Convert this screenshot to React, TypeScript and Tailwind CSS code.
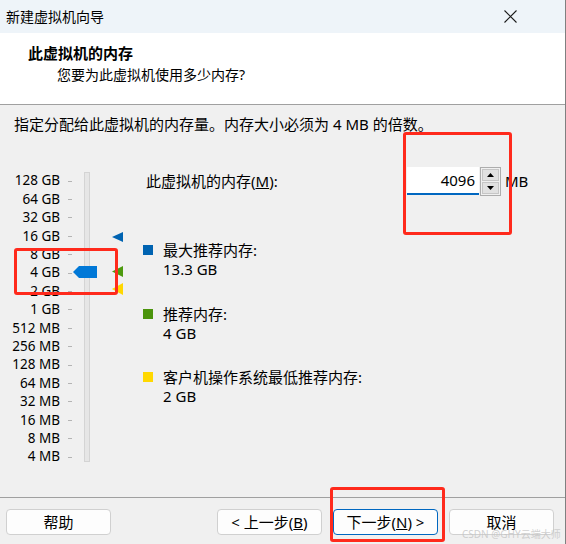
import React from 'react';

const levels = [
  '128 GB', '64 GB', '32 GB', '16 GB', '8 GB', '4 GB', '2 GB', '1 GB',
  '512 MB', '256 MB', '128 MB', '64 MB', '32 MB', '16 MB', '8 MB', '4 MB',
];

const Legend: React.FC<{ color: string; label: string; value: string }> = ({ color, label, value }) => (
  <div className="flex">
    <div className={`w-[10px] h-[10px] mt-[4px] shrink-0 ${color}`} />
    <div className="ml-[10px] leading-[19px]">
      <div>{label}</div>
      <div>{value}</div>
    </div>
  </div>
);

const Btn: React.FC<{ children: React.ReactNode; primary?: boolean }> = ({ children, primary }) => (
  <button
    className={`w-[105px] h-[26px] rounded-[4px] bg-[#fdfdfd] text-[15px] leading-none text-black border ${
      primary ? 'border-[#0067c0]' : 'border-[#d0d0d0]'
    }`}
  >
    {children}
  </button>
);

export default function App() {
  return (
    <div className="relative w-[566px] h-[544px] flex flex-col bg-[#f0f0f0] border-r border-[#808080] text-black font-['Noto_Sans','Noto_Sans_CJK_SC',sans-serif] overflow-hidden">
      {/* 标题栏 */}
      <div className="h-[33px] shrink-0 bg-[#eef4f9] flex items-center justify-between pl-[6px] pr-[48px]">
        <span className="text-[14px]">新建虚拟机向导</span>
        <svg width="13" height="13" viewBox="0 0 13 13">
          <path d="M0.5 0.5 L12.5 12.5 M12.5 0.5 L0.5 12.5" stroke="#1a1a1a" strokeWidth="1.1" />
        </svg>
      </div>

      {/* 头部 */}
      <div className="h-[72px] shrink-0 bg-white border-b border-[#a0a0a0] pl-[28px] pt-[9px]">
        <div className="text-[15px] font-bold leading-[22px]">此虚拟机的内存</div>
        <div className="text-[14px] leading-[20px] pl-[29px] mt-[1px]">您要为此虚拟机使用多少内存?</div>
      </div>

      {/* 主体 */}
      <div className="flex-1 pt-[9px]">
        <div className="pl-[14px] text-[15px] leading-[20px]">指定分配给此虚拟机的内存量。内存大小必须为 4 MB 的倍数。</div>

        <div className="flex mt-[33px]">
          {/* 滑块 */}
          <div className="relative w-[143px] shrink-0 flex">
            <div className="pt-[5px]">
              {levels.map((l) => (
                <div key={l} className="flex items-center h-[18.4px]">
                  <span className="w-[60px] text-right text-[13.5px] leading-none">{l}</span>
                  <span className="ml-[8px] w-[4px] h-px bg-[#b4b4b4]" />
                </div>
              ))}
            </div>
            <div className="ml-[12px] mt-[5px] w-[6px] h-[290px] bg-[#e6e6e6] border border-[#d4d4d4]" />

            <svg className="absolute left-[73px] top-[99px]" width="24" height="12" viewBox="0 0 24 12">
              <polygon points="0,6 6,0 24,0 24,12 6,12" fill="#0078d7" />
            </svg>
            <svg className="absolute left-[112px] top-[65px]" width="11" height="10" viewBox="0 0 11 10">
              <polygon points="0,5 11,0 11,10" fill="#0063b1" />
            </svg>
            <svg className="absolute left-[112px] top-[99px]" width="11" height="11" viewBox="0 0 11 11">
              <polygon points="0,5.5 11,0 11,11" fill="#4d9a0e" />
            </svg>
            <svg className="absolute left-[112px] top-[116px]" width="11" height="12" viewBox="0 0 11 12">
              <polygon points="0,6 11,0 11,12" fill="#ffd700" />
            </svg>
          </div>

          {/* 右侧 */}
          <div className="text-[15px]">
            <div className="flex items-center h-[29px]">
              <span className="w-[264px] pl-[3px] leading-none">
                此虚拟机的内存(<span className="underline">M</span>):
              </span>
              <div className="w-[72px] h-[28px] self-start bg-white border-b-2 border-[#0067c0] flex items-center justify-end pr-[4px] leading-none">
                4096
              </div>
              <div className="ml-[1px] w-[21px] h-[29px] border border-[#adadad] bg-[#f0f0f0] flex flex-col p-px gap-px">
                <div className="flex-1 bg-[#e1e1e1] border border-[#c6c6c6] flex items-center justify-center">
                  <svg width="7" height="4" viewBox="0 0 7 4"><polygon points="3.5,0 7,4 0,4" fill="#000" /></svg>
                </div>
                <div className="flex-1 bg-[#e1e1e1] border border-[#c6c6c6] flex items-center justify-center">
                  <svg width="7" height="4" viewBox="0 0 7 4"><polygon points="0,0 7,0 3.5,4" fill="#000" /></svg>
                </div>
              </div>
              <span className="ml-[4px] leading-none">MB</span>
            </div>

            <div className="mt-[45px] flex flex-col gap-[25.5px]">
              <Legend color="bg-[#0063b1]" label="最大推荐内存:" value="13.3 GB" />
              <Legend color="bg-[#4b940c]" label="推荐内存:" value="4 GB" />
              <Legend color="bg-[#ffd800]" label="客户机操作系统最低推荐内存:" value="2 GB" />
            </div>
          </div>
        </div>
      </div>

      {/* 底部按钮 */}
      <div className="h-[47px] shrink-0 border-t border-[#a0a0a0] pt-[11px] pl-[6px] flex">
        <Btn>帮助</Btn>
        <div className="ml-[106px] flex gap-[11px]">
          <Btn>
            &lt; 上一步(<span className="underline">B</span>)
          </Btn>
          <Btn primary>
            下一步(<span className="underline">N</span>) &gt;
          </Btn>
          <Btn>取消</Btn>
        </div>
      </div>

      {/* 标注框 */}
      <div className="absolute left-[14px] top-[248px] w-[104px] h-[47px] border-[3px] border-[#ff2a1c] rounded-[3px]" />
      <div className="absolute left-[403px] top-[132px] w-[109px] h-[103px] border-[3px] border-[#ff2a1c] rounded-[3px]" />
      <div className="absolute left-[330px] top-[487px] w-[115px] h-[55px] border-[3px] border-[#ff2a1c] rounded-[3px]" />

      <div className="absolute left-[462px] top-[529px] whitespace-nowrap text-[10px] leading-none text-[#c4c4c4]/80">CSDN @GHY云端大师</div>
    </div>
  );
}
